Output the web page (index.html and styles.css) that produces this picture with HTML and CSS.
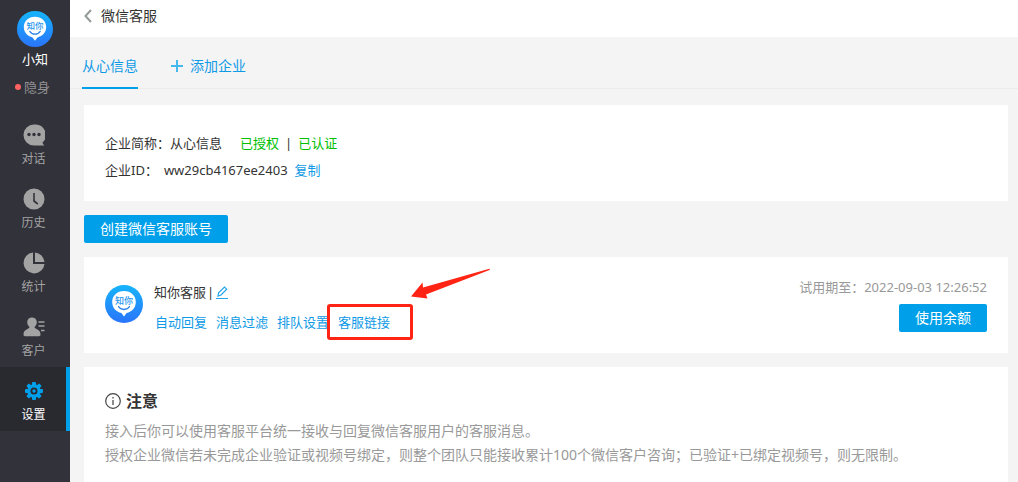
FILE: index.html
```html
<!DOCTYPE html>
<html lang="zh-CN">
<head>
<meta charset="utf-8">
<meta name="viewport" content="width=device-width, initial-scale=1">
<title>微信客服</title>
<link rel="stylesheet" href="styles.css">
</head>
<body>
<svg class="defs" aria-hidden="true">
  <defs>
    <linearGradient id="logo-fill" x1="0" y1="0" x2="0" y2="1">
      <stop offset="0" stop-color="#16b4fb"/>
      <stop offset="1" stop-color="#2a74fa"/>
    </linearGradient>
    <symbol id="logo" viewBox="0 0 38 38">
      <circle cx="19" cy="19" r="19" fill="url(#logo-fill)"/>
      <path d="M19 6c-6.900 0-11.800 4.700-11.800 11 0 5.700 3.800 9.800 9.200 11L19 31.500l2.600-3.500c5.400-1.200 9.200-5.300 9.200-11C30.800 10.700 25.900 6 19 6z" fill="#fff"/>
      <text x="19" y="19" text-anchor="middle" class="logo-text">知你</text>
      <path d="M13.500 21.500c2.500 4 8.500 4 11 0" fill="none" stroke="#2a80e8" stroke-width="1.300" stroke-linecap="round"/>
    </symbol>
  </defs>
</svg>
<div class="app">
  <aside class="sidebar">
    <div class="profile">
      <svg class="profile-logo"><use href="#logo"/></svg>
      <div class="profile-name">小知</div>
      <div class="profile-status"><span class="dot"></span>隐身</div>
    </div>
    <nav class="nav">
      <a class="nav-item" href="#">
        <svg class="nav-icon" viewBox="0 0 22 22"><path fill="#a3a3a3" d="M11 .5a10.500 10.500 0 1 0 0 21h10.500c-.8-.5-1.700-1.500-2-2.900A10.500 10.500 0 0 0 11 .5z"/><g fill="#32323a"><circle cx="6" cy="10.500" r="1.700"/><circle cx="11" cy="10.500" r="1.700"/><circle cx="16" cy="10.500" r="1.700"/></g></svg>
        <span>对话</span>
      </a>
      <a class="nav-item" href="#">
        <svg class="nav-icon" viewBox="0 0 22 22"><circle cx="11" cy="11" r="10.500" fill="#a3a3a3"/><path d="M11 5v8l3.800 3" fill="none" stroke="#32323a" stroke-width="1.600"/></svg>
        <span>历史</span>
      </a>
      <a class="nav-item" href="#">
        <svg class="nav-icon" viewBox="0 0 22 22"><path fill="#a3a3a3" d="M10 .5V12h11.500A10.500 10.500 0 1 1 10 .5z"/><path fill="#a3a3a3" d="M12 .5a10.500 10.500 0 0 1 9.500 9.500H12z"/></svg>
        <span>统计</span>
      </a>
      <a class="nav-item" href="#">
        <svg class="nav-icon" viewBox="0 0 22 22"><path fill="#a3a3a3" d="M9 1.500c2.800 0 4.800 2 4.800 4.800 0 2-1 3.800-2.300 4.700.2 1.200 1.200 1.600 2.500 2.300 2.300 1.200 3.500 2.700 3.500 5.200 0 1.200-.5 1.700-1.500 1.700H2c-1 0-1.500-.5-1.500-1.700 0-2.500 1.200-4 3.500-5.200 1.300-.7 2.300-1.100 2.500-2.300-1.300-.9-2.300-2.700-2.300-4.700 0-2.800 2-4.800 4.800-4.800z"/><path d="M15.500 6H21.500M15.500 10H21.500M18 14.500H21.500" stroke="#a3a3a3" stroke-width="1.500"/></svg>
        <span>客户</span>
      </a>
      <a class="nav-item active" href="#" aria-current="page">
        <svg class="nav-icon" viewBox="0 0 22 22"><g fill="#009fe9"><circle cx="11" cy="11" r="6.800"/><g id="teeth"><rect x="9" y="2" width="4" height="18" rx="1"/><rect x="2" y="9" width="18" height="4" rx="1"/></g><use href="#teeth" transform="rotate(45 11 11)"/></g><circle cx="11" cy="11" r="3.500" fill="#292930"/><circle cx="11" cy="11" r="1.700" fill="#009fe9"/></svg>
        <span>设置</span>
      </a>
    </nav>
  </aside>
  <main class="main">
    <header class="header">
      <a class="back" href="#" aria-label="返回"><svg width="8" height="14" viewBox="0 0 8 14"><path d="M7 1L1.500 7 7 13" fill="none" stroke="#949999" stroke-width="2"/></svg></a>
      <h1 class="title">微信客服</h1>
    </header>
    <div class="tabs">
      <a class="tab selected" href="#">从心信息</a>
      <a class="tab" href="#"><svg width="12" height="12" viewBox="0 0 12 12"><path d="M6 0v12M0 6h12" stroke="#45b9ee" stroke-width="2"/></svg>添加企业</a>
    </div>
    <div class="content">
      <section class="card company">
        <div class="row"><span>企业简称：从心信息</span><span class="states"><span class="ok">已授权</span><span>|</span><span class="ok">已认证</span></span></div>
        <div class="row"><span>企业ID：</span><span class="company-id">ww29cb4167ee2403</span><a href="#">复制</a></div>
      </section>
      <button class="btn create" type="button">创建微信客服账号</button>
      <section class="card account">
        <svg class="account-logo"><use href="#logo"/></svg>
        <div class="account-info">
          <div class="account-name">知你客服<span class="bar">|</span><a class="edit" href="#" aria-label="编辑"><svg width="12" height="13" viewBox="0 0 12 13" fill="none" stroke="#20a4ea"><path d="M2 10l.6-3.200L8.500 1l2.200 2.200L5 9z" stroke-width="1.200"/><path d="M0 12.500h12"/></svg></a></div>
          <div class="actions">
            <a href="#">自动回复</a>
            <a href="#">消息过滤</a>
            <a href="#">排队设置</a>
            <a class="marked" href="#">客服链接<span class="mark-box"></span><svg class="mark-arrow" width="80" height="31" viewBox="0 0 80 31"><path d="M0 28.500L11.500 14.500 12 19.500 77.500 1 79 .8 78.500 2 15 26.500 16.500 30.500z" fill="#ff2413"/></svg></a>
          </div>
        </div>
        <div class="trial">
          <div class="expiry">试用期至：2022-09-03 12:26:52</div>
          <button class="btn" type="button">使用余额</button>
        </div>
      </section>
      <section class="card notice">
        <h2 class="notice-title"><svg width="16" height="16" viewBox="0 0 16 16"><circle cx="8" cy="8" r="7.300" fill="none" stroke="#444" stroke-width="1.200"/><path d="M8 7v5M8 4v1.500" stroke="#666" stroke-width="1.500"/></svg>注意</h2>
        <p>接入后你可以使用客服平台统一接收与回复微信客服用户的客服消息。</p>
        <p>授权企业微信若未完成企业验证或视频号绑定，则整个团队只能接收累计100个微信客户咨询；已验证+已绑定视频号，则无限制。</p>
      </section>
    </div>
  </main>
</div>
</body>
</html>
```

FILE: styles.css
```css
* { box-sizing: border-box; }

body {
  margin: 0;
  background: #f4f4f4;
  color: #333;
  font: 13px/20px "Noto Sans", "Noto Sans CJK SC", sans-serif;
}

a { color: #0f9ae6; text-decoration: none; }
svg { display: block; flex: none; }
h1, h2, p { margin: 0; }

.defs { position: absolute; width: 0; height: 0; }
.logo-text { font-size: 9px; font-weight: 500; fill: #2596ee; }

.app { display: flex; height: 100vh; overflow: hidden; }

.sidebar { flex: none; width: 70px; background: #32323a; }

.profile {
  display: flex;
  flex-direction: column;
  align-items: center;
  height: 111px;
  padding-top: 11px;
}
.profile-logo { width: 36px; height: 36px; }
.profile-name { margin-top: 2px; color: #fff; }
.profile-status {
  display: flex;
  align-items: center;
  gap: 3px;
  margin-top: 8px;
  padding-right: 5px;
  color: #939393;
}
.dot { width: 6px; height: 6px; border-radius: 50%; background: #ff6262; }

.nav-item {
  display: flex;
  flex-direction: column;
  align-items: center;
  gap: 3px;
  height: 64px;
  padding: 13px 3px 0 0;
  color: #a3a3a3;
  font-size: 12px;
}
.nav-icon { width: 22px; height: 22px; }
.nav-item.active {
  background: #292930;
  box-shadow: inset -4px 0 #009fe9;
  color: #fff;
}

.main { flex: 1; min-width: 0; display: flex; flex-direction: column; }

.header {
  flex: none;
  display: flex;
  align-items: center;
  gap: 9px;
  height: 37px;
  padding: 0 14px 5px;
  background: #fff;
}
.title { font-size: 14px; font-weight: 400; }

.tabs {
  flex: none;
  display: flex;
  gap: 33px;
  height: 52px;
  padding-left: 12px;
  border-bottom: 1px solid #ececec;
}
.tab {
  display: flex;
  align-items: center;
  gap: 7px;
  height: 52px;
  padding-top: 8px;
  border-bottom: 2px solid transparent;
  font-size: 14px;
}
.tab.selected { border-bottom-color: #009fe9; }

.content {
  flex: 1;
  display: flex;
  flex-direction: column;
  align-items: stretch;
  gap: 14px;
  padding: 16px 10px 0 14px;
}
.card { background: #fff; }

.company { padding: 25px 21px 17px; line-height: 27px; }
.row { display: flex; }
.states { display: flex; gap: 6px; margin-left: 18px; }
.ok { color: #00c000; }
.company-id { margin: 0 7px 0 6px; }

.btn {
  height: 28px;
  padding: 0 16px;
  border: 0;
  border-radius: 2px;
  background: #009fe9;
  color: #fff;
  font: 14px/20px "Noto Sans", "Noto Sans CJK SC", sans-serif;
}
.create { align-self: flex-start; }

.account {
  display: flex;
  height: 96px;
  padding: 20px 21px;
}
.account-logo { width: 38px; height: 38px; margin-top: 8px; }
.account-info { flex: 1; margin-left: 11px; padding-top: 5px; }
.account-name { display: flex; align-items: center; }
.bar { margin-left: 1px; }
.edit { margin-left: 2px; }
.actions {
  display: flex;
  gap: 9px;
  margin-top: 10px;
  padding-left: 1px;
  white-space: nowrap;
}

.marked { position: relative; }
.mark-box {
  position: absolute;
  top: -8px;
  left: -11px;
  width: 86px;
  height: 36px;
  border: 3px solid #ff2413;
  border-radius: 3px;
}
.mark-arrow { position: absolute; top: -44px; left: 73px; }

.trial {
  display: flex;
  flex-direction: column;
  align-items: flex-end;
  gap: 7px;
  color: #999;
}

.notice { flex: 1; padding: 22px 21px; color: #999; font-size: 14px; line-height: 24px; }
.notice-title {
  display: flex;
  align-items: center;
  gap: 5px;
  margin-bottom: 6px;
  color: #333;
  font-size: 16px;
}
```
